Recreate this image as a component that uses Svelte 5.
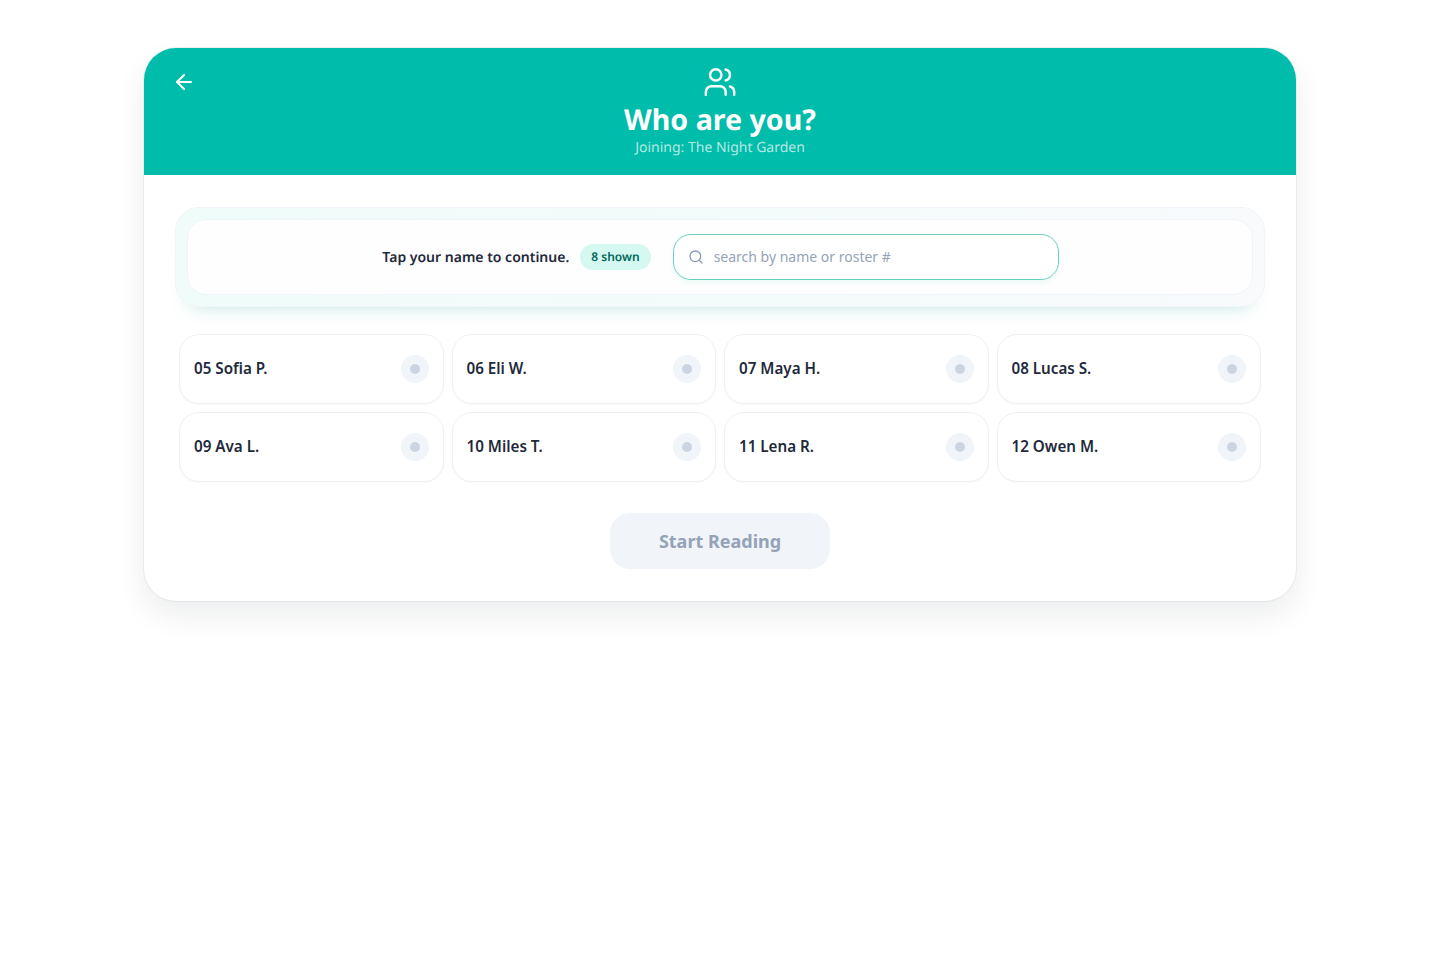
<script lang="ts">
	const students = [
		'05 Sofia P.',
		'06 Eli W.',
		'07 Maya H.',
		'08 Lucas S.',
		'09 Ava L.',
		'10 Miles T.',
		'11 Lena R.',
		'12 Owen M.'
	];
</script>

<div class="page">
	<main class="card">
		<header class="header">
			<button class="back" aria-label="Back">
				<svg width="24" height="24" viewBox="0 0 24 24" fill="none" stroke="currentColor" stroke-width="2" stroke-linecap="round" stroke-linejoin="round">
					<path d="M12 19l-7-7 7-7" />
					<path d="M19 12H5" />
				</svg>
			</button>
			<svg class="users" width="34" height="34" viewBox="0 0 24 24" fill="none" stroke="currentColor" stroke-width="1.75" stroke-linecap="round" stroke-linejoin="round">
				<path d="M16 21v-2a4 4 0 0 0-4-4H6a4 4 0 0 0-4 4v2" />
				<circle cx="9" cy="7" r="4" />
				<path d="M22 21v-2a4 4 0 0 0-3-3.87" />
				<path d="M16 3.13a4 4 0 0 1 0 7.75" />
			</svg>
			<h1>Who are you?</h1>
			<p>Joining: The Night Garden</p>
		</header>

		<section class="body">
			<div class="panel">
				<div class="panel-inner">
					<span class="hint">Tap your name to continue.</span>
					<span class="badge">8 shown</span>
					<label class="search">
						<svg width="16" height="16" viewBox="0 0 24 24" fill="none" stroke="currentColor" stroke-width="2" stroke-linecap="round" stroke-linejoin="round">
							<circle cx="11" cy="11" r="8" />
							<path d="M21 21l-4.3-4.3" />
						</svg>
						<input type="text" placeholder="search by name or roster #" />
					</label>
				</div>
			</div>

			<div class="grid">
				{#each students as name}
					<button class="student">
						<span class="name">{name}</span>
						<span class="radio"><span class="dot"></span></span>
					</button>
				{/each}
			</div>

			<div class="actions">
				<button class="start" disabled>Start Reading</button>
			</div>
		</section>
	</main>
</div>

<style>
	:global(body) {
		background: #fff;
		font-family: 'Noto Sans', sans-serif;
		text-rendering: geometricPrecision;
	}

	.page {
		padding: 48px 144px;
	}

	.card {
		background: #fff;
		border-radius: 32px;
		box-shadow: 0 0 0 1px rgba(15, 23, 42, 0.05), 0 14px 30px rgba(15, 23, 42, 0.08);
		overflow: hidden;
	}

	.header {
		position: relative;
		background: #00bcaa;
		height: 127px;
		box-sizing: border-box;
		padding-top: 17px;
		display: flex;
		flex-direction: column;
		align-items: center;
		color: #fff;
	}

	.back {
		position: absolute;
		left: 28px;
		top: 22px;
		padding: 0;
		width: 24px;
		height: 24px;
		border: none;
		background: none;
		color: #fff;
	}

	.users {
		display: block;
	}

	h1 {
		margin: 4px 0 0;
		font-size: 28.6px;
		line-height: 34px;
		font-weight: 700;
	}

	.header p {
		margin: 1px 0 0;
		font-size: 14px;
		line-height: 20px;
		color: rgba(255, 255, 255, 0.7);
	}

	.body {
		padding: 32px 31px;
	}

	.panel {
		border: 1px solid #f1f5f9;
		border-radius: 24px;
		padding: 11px;
		background: linear-gradient(90deg, #effcf9, #f8fafc);
		box-shadow: 0 14px 18px -14px rgba(0, 150, 136, 0.25);
	}

	.panel-inner {
		display: flex;
		align-items: center;
		justify-content: center;
		height: 76px;
		box-sizing: border-box;
		padding-left: 1px;
		background: #fefefe;
		border: 1px solid #f1f5f9;
		border-radius: 20px;
	}

	.hint {
		font-size: 14px;
		font-weight: 600;
		color: #1e293b;
	}

	.badge {
		margin-left: 11px;
		padding: 0 11px;
		height: 26px;
		line-height: 25px;
		border-radius: 13px;
		background: #d5f9f1;
		color: #00695c;
		font-size: 12px;
		font-weight: 600;
	}

	.search {
		margin-left: 22px;
		display: flex;
		align-items: center;
		gap: 10px;
		width: 386px;
		height: 46px;
		box-sizing: border-box;
		padding: 0 14px;
		background: #fff;
		border: 1px solid #6bcfc0;
		border-radius: 18px;
		color: #8a9ab5;
		box-shadow: 0 2px 6px rgba(0, 189, 170, 0.08);
	}

	.search input {
		flex: 1;
		height: 18px;
		line-height: 18px;
		margin-bottom: 1px;
		border: none;
		outline: none;
		padding: 0;
		background: none;
		font-family: inherit;
		font-size: 14px;
		color: #1e293b;
	}

	.search input::placeholder {
		color: #94a3b8;
		opacity: 1;
	}

	.grid {
		margin: 27px 4px 0;
		display: grid;
		grid-template-columns: repeat(4, 1fr);
		gap: 8px;
	}

	.student {
		display: flex;
		align-items: center;
		justify-content: space-between;
		height: 70px;
		padding: 0 14px;
		background: #fff;
		border: 1px solid #eef0f3;
		border-radius: 20px;
		font-family: inherit;
		font-size: 15.2px;
		font-weight: 600;
		color: #1e293b;
		box-shadow: 0 1px 2px rgba(15, 23, 42, 0.03);
	}

	.name {
		line-height: 20px;
		margin-bottom: 2px;
	}

	.radio {
		width: 28px;
		height: 28px;
		border-radius: 50%;
		background: #f1f5f9;
		display: flex;
		align-items: center;
		justify-content: center;
	}

	.dot {
		width: 10px;
		height: 10px;
		border-radius: 50%;
		background: #cbd5e1;
	}

	.actions {
		margin-top: 31px;
		display: flex;
		justify-content: center;
	}

	.start {
		width: 220px;
		height: 56px;
		border: none;
		border-radius: 20px;
		background: #f1f5f9;
		color: #94a3b8;
		font-family: inherit;
		font-size: 18px;
		font-weight: 700;
	}
</style>
